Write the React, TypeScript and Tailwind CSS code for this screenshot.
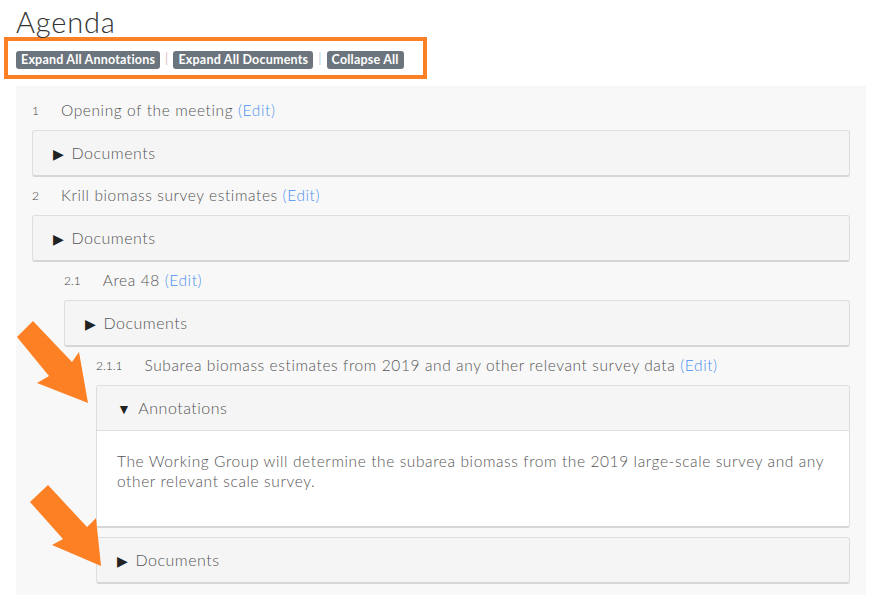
import React from 'react';

type Item = {
  num: string;
  title: string;
  depth: number;
  annotation?: string;
};

const items: Item[] = [
  { num: '1', title: 'Opening of the meeting', depth: 0 },
  { num: '2', title: 'Krill biomass survey estimates', depth: 0 },
  { num: '2.1', title: 'Area 48', depth: 1 },
  {
    num: '2.1.1',
    title: 'Subarea biomass estimates from 2019 and any other relevant survey data',
    depth: 2,
    annotation:
      'The Working Group will determine the subarea biomass from the 2019 large-scale survey and any other relevant scale survey.',
  },
];

const indent = ['pl-0', 'pl-[32px]', 'pl-[64px]'];

function Toggle({ label, open }: { label: string; open?: boolean }) {
  return (
    <div className="h-[44px] flex items-center pl-[20px] text-[16px] font-light tracking-[0.5px] text-[#555]">
      <span className="text-[#222] text-[14px] mr-[7px]">{open ? '▼' : '▶'}</span>
      {label}
    </div>
  );
}

function AgendaItem({ item }: { item: Item }) {
  return (
    <div className={indent[item.depth]}>
      <div className="h-[38px] flex items-center pb-[1px]">
        <span className="text-[12px] font-light text-[#444] mr-[22px]">{item.num}</span>
        <span className="text-[15.5px] font-light tracking-[0.6px] text-[#555]">
          {item.title} <span className="text-[#4a90f0]">(Edit)</span>
        </span>
      </div>
      {item.annotation && (
        <div className="mb-[9px] rounded-[3px] border border-[#dedede] border-b-2 border-b-[#d6d6d6] bg-white overflow-hidden">
          <div className="bg-[#f5f5f5] border-b border-[#dedede]">
            <Toggle label="Annotations" open />
          </div>
          <p className="px-[20px] pt-[20px] pb-[35px] text-[15.5px] leading-[20px] font-light tracking-[0.6px] text-[#555]">
            {item.annotation}
          </p>
        </div>
      )}
      <div className="rounded-[3px] border border-[#dedede] border-b-2 border-b-[#d6d6d6] bg-[#f5f5f5]">
        <Toggle label="Documents" />
      </div>
    </div>
  );
}

export default function App() {
  return (
    <div className="w-[885px] h-[595px] bg-white relative overflow-hidden font-['Lato',sans-serif]">
      <h1 className="pl-[16px] pt-[6px] text-[29px] leading-[31px] font-light tracking-[0.8px] text-[#333]">Agenda</h1>
      <div className="ml-[4px] w-[423px] h-[42px] border-[4px] border-[#fd8024] flex items-center pl-[8px] pt-[3px] gap-[5px] text-[12.5px] font-bold tracking-[0.2px] text-white">
        <span className="bg-[#6c757d] rounded-[3px] px-[5px] leading-[18px]">Expand All Annotations</span>
        <span className="text-[#e0bcbc] font-normal">|</span>
        <span className="bg-[#6c757d] rounded-[3px] px-[5px] leading-[18px]">Expand All Documents</span>
        <span className="text-[#b8d0e0] font-normal">|</span>
        <span className="bg-[#6c757d] rounded-[3px] px-[5px] leading-[18px]">Collapse All</span>
      </div>
      <div className="ml-[16px] mt-[7px] w-[850px] h-[520px] bg-[#f8f8f8] px-[16px] pt-[6px] flex flex-col">
        {items.map((item) => (
          <AgendaItem key={item.num} item={item} />
        ))}
      </div>
      <svg className="absolute left-0 top-0 pointer-events-none" width="885" height="595">
        <polygon points="17,337 33,321 72,362 79,352 88,403 37,383 49,376" fill="#fd8024" />
        <polygon points="30,502 48,485 87,527 96,518 101,566 52,545 63,539" fill="#fd8024" />
      </svg>
    </div>
  );
}
